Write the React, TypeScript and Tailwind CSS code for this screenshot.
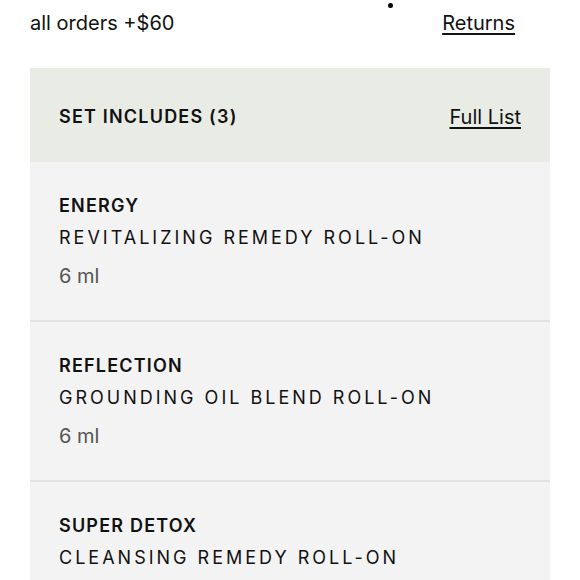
const items = [
  { name: "ENERGY", title: "REVITALIZING REMEDY ROLL-ON", size: "6 ml" },
  { name: "REFLECTION", title: "GROUNDING OIL BLEND ROLL-ON", size: "6 ml" },
  { name: "SUPER DETOX", title: "CLEANSING REMEDY ROLL-ON", size: "6 ml" },
];

export default function App() {
  return (
    <div className="h-[580px] w-[580px] overflow-hidden bg-white font-['Inter',sans-serif] text-[#111]">
      <div className="relative flex items-center justify-between pl-[30px] pr-[65px] pt-[8px]">
        <span className="text-[20px]">all orders +$60</span>
        <span className="text-[20px] underline underline-offset-[3px]">Returns</span>
        <span className="absolute left-[388px] top-[3px] h-[5px] w-[5px] rounded-full bg-black" />
      </div>

      <div className="mx-[30px] mt-[30px]">
        <div className="flex h-[94px] items-center justify-between bg-[#e8ece5] pl-[29px] pr-[29px] pt-[3px]">
          <span className="text-[18px] font-semibold tracking-[1.2px]">SET INCLUDES (3)</span>
          <span className="text-[20px] underline underline-offset-[3px]">Full List</span>
        </div>
        {items.map((it, i) => (
          <div
            key={it.name}
            className={`flex h-[160px] flex-col bg-[#f3f3f3] pl-[29px] pt-[33px] ${i < items.length - 1 ? "border-b-2 border-[#e2e2e2]" : ""}`}
          >
            <span className="text-[18px] font-semibold leading-[22px] tracking-[1.2px]">{it.name}</span>
            <span className="mt-[9px] text-[18px] leading-[24px] tracking-[3px]">{it.title}</span>
            <span className="mt-[14px] text-[20px] leading-[24px] text-[#555]">{it.size}</span>
          </div>
        ))}
      </div>
    </div>
  );
}
